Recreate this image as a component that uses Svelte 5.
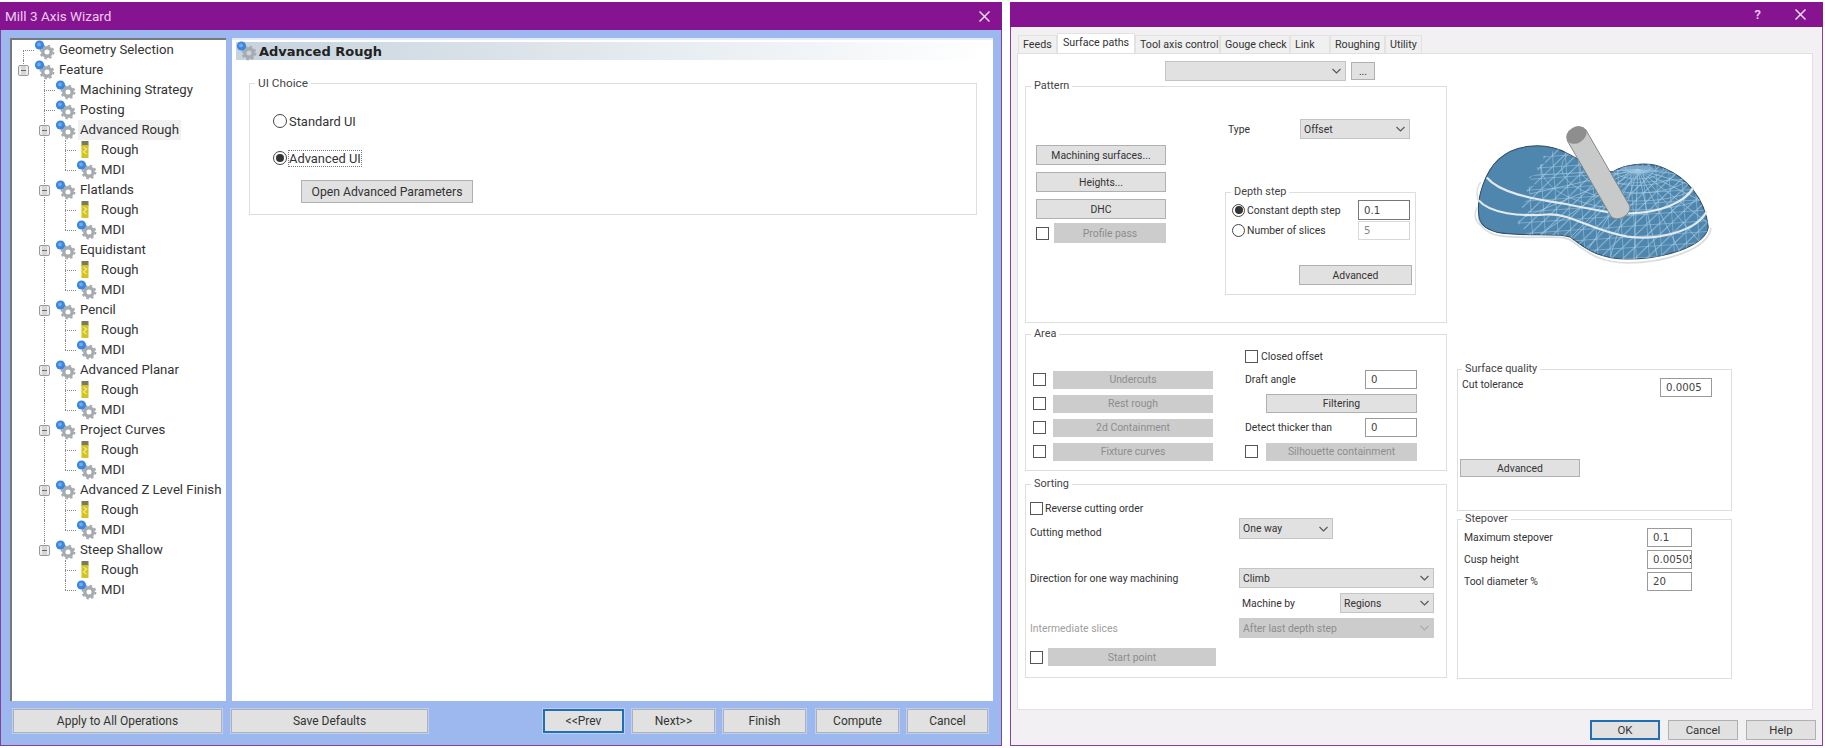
<script>
  // Tree data for the wizard panel
  const ops = [
    'Advanced Rough',
    'Flatlands',
    'Equidistant',
    'Pencil',
    'Advanced Planar',
    'Project Curves',
    'Advanced Z Level Finish',
    'Steep Shallow'
  ];

  let rows = [
    { guides: ['tee-top'], icon: 'gear', label: 'Geometry Selection' },
    { guides: ['ell-box'], icon: 'gear', label: 'Feature' },
    { guides: ['blank', 'tee'], icon: 'gear', label: 'Machining Strategy' },
    { guides: ['blank', 'tee'], icon: 'gear', label: 'Posting' }
  ];

  ops.forEach((label, i) => {
    const last = i === ops.length - 1;
    const trunk = last ? 'blank' : 'pipe';
    rows.push({
      guides: ['blank', last ? 'ell-box' : 'tee-box'],
      icon: 'gear',
      label,
      selected: i === 0
    });
    rows.push({ guides: ['blank', trunk, 'tee'], icon: 'mill', label: 'Rough' });
    rows.push({ guides: ['blank', trunk, 'ell'], icon: 'gear', label: 'MDI' });
  });

  const tabs = [
    { label: 'Feeds', width: 39 },
    { label: 'Surface paths', width: 78, active: true },
    { label: 'Tool axis control', width: 85 },
    { label: 'Gouge check', width: 70 },
    { label: 'Link', width: 40 },
    { label: 'Roughing', width: 55 },
    { label: 'Utility', width: 37 }
  ];

  // Wireframe lines over the blue surface, spokes first and then rings
  const hub = [650, 238];
  const spokes = [];
  for (let a = 8; a < 180; a += 12) {
    const r = (a * Math.PI) / 180;
    spokes.push([hub[0] + Math.cos(r) * 380, hub[1] + Math.sin(r) * 300]);
  }
  const rings = [30, 62, 98, 138, 182, 230];
</script>

{#snippet gear()}
  <svg class="ico" width="26" height="24" viewBox="0 0 26 24">
    <circle cx="13" cy="14" r="4.2" fill="none" stroke="#a6abb0" stroke-width="3.4" />
    <circle cx="13" cy="14" r="6.4" fill="none" stroke="#a6abb0" stroke-width="2" stroke-dasharray="2.5 2.5" />
    <circle cx="5.5" cy="7" r="4.6" fill="#3b87e0" />
    <circle cx="5" cy="6.4" r="1.9" fill="#6fabee" />
  </svg>
{/snippet}

{#snippet mill()}
  <svg class="ico" width="26" height="24" viewBox="0 0 26 24">
    <rect x="5.500" y="3" width="7" height="5" fill="#7c7a5c" />
    <rect x="5.500" y="7" width="7" height="13" fill="#d4c21e" />
    <path d="M7.500 9l3 2-3 3 3 2" fill="none" stroke="#f3ea8a" stroke-width="1.2" />
  </svg>
{/snippet}

{#snippet chevron()}
  <svg class="chev" width="9" height="6" viewBox="0 0 9 6">
    <path d="M.5 1l4 4 4-4" fill="none" stroke="#555" stroke-width="1.1" />
  </svg>
{/snippet}

{#snippet closeX()}
  <svg width="11" height="11" viewBox="0 0 11 11">
    <path d="M.5.5l10 10M10.5.5l-10 10" stroke="#f3d9f5" stroke-width="1.5" />
  </svg>
{/snippet}

<div class="screen">
  <!-- Left window -->
  <section class="win wizard">
    <header class="title">
      <span class="title-text">Mill 3 Axis Wizard</span>
      <span class="close">{@render closeX()}</span>
    </header>

    <div class="wizard-body">
      <div class="panels">
        <div class="tree">
          {#each rows as row}
            <div class="tree-row">
              {#each row.guides as g}
                <span class="guide {g}"></span>
              {/each}
              {#if row.icon === 'gear'}{@render gear()}{:else}{@render mill()}{/if}
              <span class="tree-label" class:selected={row.selected}>{row.label}</span>
            </div>
          {/each}
        </div>

        <div class="page">
          <div class="page-head">
            {@render gear()}
            <span>Advanced Rough</span>
          </div>
          <fieldset class="ui-choice">
            <legend>UI Choice</legend>
            <div class="ui-row"><span class="radio"></span><span>Standard UI</span></div>
            <div class="ui-row second"><span class="radio on"></span><span class="focus">Advanced UI</span></div>
            <button class="btn open-adv">Open Advanced Parameters</button>
          </fieldset>
        </div>
      </div>

      <div class="wizard-buttons">
        <button class="btn apply">Apply to All Operations</button>
        <button class="btn save">Save Defaults</button>
        <button class="btn nav first default">&lt;&lt;Prev</button>
        <button class="btn nav">Next&gt;&gt;</button>
        <button class="btn nav">Finish</button>
        <button class="btn nav wide-gap">Compute</button>
        <button class="btn nav last">Cancel</button>
      </div>
    </div>
  </section>

  <!-- Right window -->
  <section class="win dialog">
    <header class="title short">
      <span class="help-mark">?</span>
      <span class="close">{@render closeX()}</span>
    </header>

    <div class="tabs">
      {#each tabs as tab}
        <div class="tab" class:active={tab.active} style="width: {tab.width}px">{tab.label}</div>
      {/each}
    </div>

    <div class="tab-panel">
      <div class="col-left">
        <div class="top-combo">
          <div class="combo blank-combo">{@render chevron()}</div>
          <button class="btn dots">...</button>
        </div>

        <fieldset class="pattern">
          <legend>Pattern</legend>
          <div class="pattern-left">
            <button class="btn">Machining surfaces...</button>
            <button class="btn">Heights...</button>
            <button class="btn">DHC</button>
            <div class="check-row">
              <span class="check"></span>
              <button class="btn off grow">Profile pass</button>
            </div>
          </div>
          <div class="pattern-right">
            <div class="type-row">
              <span>Type</span>
              <div class="combo type-combo">Offset{@render chevron()}</div>
            </div>
            <fieldset class="depth">
              <legend>Depth step</legend>
              <div class="depth-row">
                <span class="radio small on"></span>
                <span class="depth-label">Constant depth step</span>
                <input class="num strong" readonly value="0.1" />
              </div>
              <div class="depth-row">
                <span class="radio small"></span>
                <span class="depth-label">Number of slices</span>
                <input class="num faint" readonly value="5" />
              </div>
              <button class="btn depth-adv">Advanced</button>
            </fieldset>
          </div>
        </fieldset>

        <fieldset class="area">
          <legend>Area</legend>
          <div class="area-grid">
            <div></div>
            <div class="check-row closed"><span class="check"></span><span>Closed offset</span></div>

            <div class="check-row"><span class="check"></span><button class="btn off grow">Undercuts</button></div>
            <div class="label-input"><span>Draft angle</span><input class="num" readonly value="0" /></div>

            <div class="check-row"><span class="check"></span><button class="btn off grow">Rest rough</button></div>
            <button class="btn filter">Filtering</button>

            <div class="check-row"><span class="check"></span><button class="btn off grow">2d Containment</button></div>
            <div class="label-input"><span>Detect thicker than</span><input class="num" readonly value="0" /></div>

            <div class="check-row"><span class="check"></span><button class="btn off grow">Fixture curves</button></div>
            <div class="check-row sil"><span class="check"></span><button class="btn off grow">Silhouette containment</button></div>
          </div>
        </fieldset>

        <fieldset class="sorting">
          <legend>Sorting</legend>
          <div class="check-row reverse"><span class="check"></span><span>Reverse cutting order</span></div>
          <div class="sort-row cutting">
            <span class="sort-label low">Cutting method</span>
            <div class="combo one-way">One way{@render chevron()}</div>
          </div>
          <div class="sort-row direction">
            <span class="sort-label">Direction for one way machining</span>
            <div class="combo long">Climb{@render chevron()}</div>
          </div>
          <div class="sort-row machine">
            <span class="sort-label"></span>
            <div class="machine-by">
              <span>Machine by</span>
              <div class="combo regions">Regions{@render chevron()}</div>
            </div>
          </div>
          <div class="sort-row inter">
            <span class="sort-label dim">Intermediate slices</span>
            <div class="combo long off">After last depth step{@render chevron()}</div>
          </div>
          <div class="check-row start"><span class="check"></span><button class="btn off grow">Start point</button></div>
        </fieldset>
      </div>

      <div class="col-right">
        <svg class="surface" width="245" height="143" viewBox="150 100 730 425">
          <defs>
            <clipPath id="blob">
              <path d="M176 372C170 320 195 245 235 208C280 165 370 152 440 190C470 205 530 242 575 245C610 222 680 212 730 235C790 260 850 320 860 410C850 470 720 505 620 505C530 505 490 470 450 440C420 425 300 440 230 425C195 415 178 400 176 372Z" />
            </clipPath>
            <clipPath id="meshEdge">
              <path d="M400 170L390 200L365 195L375 220L345 225L355 250L325 260L345 285L310 290L335 320L295 345L325 365L290 395L315 420L330 520L900 520L900 170Z" />
            </clipPath>
            <pattern id="tri" width="38" height="32" patternUnits="userSpaceOnUse" patternTransform="rotate(-4)">
              <path d="M0 0H38M0 0V32M0 32L38 0" fill="none" stroke="#a9cfe8" stroke-width="2.8" />
            </pattern>
          </defs>
          <path d="M176 372C172 400 195 428 240 436C320 448 420 430 450 448C490 478 530 516 620 516C720 516 860 480 868 412" fill="none" stroke="#d8dde0" stroke-width="5" />
          <path d="M176 372C170 320 195 245 235 208C280 165 370 152 440 190C470 205 530 242 575 245C610 222 680 212 730 235C790 260 850 320 860 410C850 470 720 505 620 505C530 505 490 470 450 440C420 425 300 440 230 425C195 415 178 400 176 372Z" fill="#4f86ad" stroke="#2e4a66" stroke-width="3" />
          <g clip-path="url(#blob)">
            <g clip-path="url(#meshEdge)">
              <rect x="150" y="100" width="750" height="430" fill="url(#tri)" />
              <ellipse cx="650" cy="238" rx="50" ry="12" fill="#7ba8c8" />
              {#each spokes as s}
                <line x1={hub[0]} y1={hub[1]} x2={s[0]} y2={s[1]} stroke="#a9cfe8" stroke-width="2" />
              {/each}
              {#each rings as r}
                <ellipse cx={hub[0]} cy={hub[1] - 6} rx={r * 1.25} ry={r * 0.55} fill="none" stroke="#a9cfe8" stroke-width="1.8" />
              {/each}
            </g>
          </g>
          <path d="M200 262C240 310 340 325 430 340C500 352 560 372 640 368C710 364 790 340 815 292" fill="none" stroke="#e2eaef" stroke-width="6.500" />
          <path d="M176 330C210 370 300 378 380 372C450 368 510 420 620 438C710 450 830 420 855 362" fill="none" stroke="#e2eaef" stroke-width="6.500" />
          <path d="M182 275C165 300 170 325 178 335M172 350C158 375 165 395 190 412" fill="none" stroke="#d8dde0" stroke-width="4" />
          <g transform="translate(467 135) rotate(-30)">
            <path d="M-32 0V260A32 22 0 0 0 32 260V0Z" fill="#c8cac9" stroke="#7e8384" stroke-width="2.5" />
            <ellipse cx="0" cy="0" rx="32" ry="24" fill="#8e8e8e" />
          </g>
        </svg>

        <fieldset class="quality">
          <legend>Surface quality</legend>
          <div class="quality-row">
            <span>Cut tolerance</span>
            <input class="num" readonly value="0.0005" />
          </div>
          <button class="btn quality-adv">Advanced</button>
        </fieldset>

        <fieldset class="stepover">
          <legend>Stepover</legend>
          <div class="step-row"><span>Maximum stepover</span><input class="num" readonly value="0.1" /></div>
          <div class="step-row"><span>Cusp height</span><input class="num" readonly value="0.00505" /></div>
          <div class="step-row"><span>Tool diameter %</span><input class="num" readonly value="20" /></div>
        </fieldset>
      </div>
    </div>

    <div class="dialog-buttons">
      <button class="btn default">OK</button>
      <button class="btn">Cancel</button>
      <button class="btn">Help</button>
    </div>
  </section>
</div>

<style>
  :global(body) {
    margin: 0;
    background: #fff;
  }

  .screen {
    display: flex;
    gap: 8px;
    width: 1825px;
    height: 748px;
    padding-top: 2px;
    box-sizing: border-box;
    font-family: Roboto, "Noto Sans", sans-serif;
    font-size: 10.4px;
    color: #333;
  }

  .win {
    display: flex;
    flex-direction: column;
    height: 744px;
    box-sizing: border-box;
    border: 1px solid #84409a;
    border-top: 0;
  }

  .title {
    display: flex;
    align-items: center;
    height: 28px;
    flex: none;
    background: #861490;
    color: #eccdf0;
    font-size: 13.5px;
    padding: 0 12px 0 5px;
    margin: 0 -1px;
  }
  .title-text {
    flex: 1;
  }
  .close {
    display: flex;
  }
  .title.short {
    height: 25px;
    justify-content: flex-end;
    padding-right: 17px;
  }
  .help-mark {
    font-size: 13px;
    font-weight: 600;
    margin-right: 34px;
  }

  /* Wizard window */
  .wizard {
    width: 1002px;
    background: #9db8ef;
  }
  .wizard-body {
    flex: 1;
    display: flex;
    flex-direction: column;
    padding: 8px 8px 0 9px;
    min-height: 0;
  }
  .panels {
    display: flex;
    gap: 6px;
    height: 663px;
  }

  .tree {
    width: 216px;
    box-sizing: border-box;
    background: #fff;
    border-top: 2px solid #777;
    border-left: 2px solid #777;
    padding: 0 0 0 1px;
    font-size: 13.2px;
    color: #333;
  }
  .tree-row {
    display: flex;
    align-items: center;
    height: 20px;
  }
  .ico {
    flex: none;
    overflow: visible;
    margin-right: -1px;
  }
  .tree-label {
    line-height: 20px;
    white-space: nowrap;
  }
  .tree-label.selected {
    background: #f0f0f0;
    padding: 0 2px;
    margin-left: -2px;
  }

  .guide {
    position: relative;
    flex: none;
    width: 21px;
    height: 20px;
  }
  .guide::before,
  .guide::after {
    content: "";
    position: absolute;
  }
  /* vertical part */
  .pipe::before,
  .tee::before,
  .tee-box::before {
    left: 10px;
    top: 0;
    height: 20px;
    border-left: 1px dotted #888;
  }
  .ell::before,
  .ell-box::before,
  .tee-top::before {
    left: 10px;
    top: 0;
    height: 10px;
    border-left: 1px dotted #888;
  }
  .tee-top::before {
    top: 10px;
  }
  /* horizontal part */
  .tee::after,
  .ell::after,
  .tee-top::after {
    left: 10px;
    top: 10px;
    width: 11px;
    border-top: 1px dotted #888;
  }
  /* the +/- box */
  .tee-box::after,
  .ell-box::after {
    left: 5px;
    top: 5px;
    width: 9px;
    height: 9px;
    background: linear-gradient(#d6d6d6 0 4px, #666 4px 5px, #d6d6d6 5px);
    background-size: 5px 9px;
    background-repeat: no-repeat;
    background-position: center;
    background-color: #eee;
    border: 1px solid #9a9a9a;
    border-radius: 2px;
  }

  .page {
    flex: 1;
    background: #fff;
    padding-top: 4px;
    box-shadow: inset 0 2px 0 #e6ecf7;
  }
  .page-head {
    display: flex;
    align-items: center;
    height: 18px;
    margin: 0 3px 0 4px;
    background: linear-gradient(to right, #c6d3dd, #fff);
    font-family: "DejaVu Sans", sans-serif;
    font-weight: 700;
    font-size: 13px;
    color: #222;
  }
  .page-head :global(.ico) {
    margin-right: -3px;
  }
  .ui-choice {
    margin: 16px 0 0 17px;
    width: 728px;
    height: 139px;
    box-sizing: border-box;
  }
  .ui-row {
    display: flex;
    align-items: center;
    gap: 2px;
    margin: 23px 0 0 23px;
    font-size: 12.9px;
    height: 16px;
  }
  .ui-row.second {
    margin-top: 21px;
  }
  .focus {
    outline: 1px dotted #777;
  }
  .ui-choice .open-adv {
    display: block;
    width: 172px;
    height: 23px;
    margin: 14px 0 0 51px;
    font-size: 12.2px;
  }

  .wizard-buttons {
    display: flex;
    margin-top: 8px;
    padding-left: 3px;
  }
  .wizard-buttons .btn {
    height: 24px;
    font-size: 12px;
    box-shadow: 0 0 0 1px #bcd0f5;
  }
  .apply {
    width: 209px;
  }
  .save {
    width: 197px;
    margin-left: 9px;
  }
  .nav {
    width: 83px;
    margin-left: 8px;
  }
  .nav.first {
    width: 81px;
    margin-left: 115px;
  }
  .nav.last {
    width: 81px;
  }
  .wide-gap {
    margin-left: 10px;
  }

  /* Shared controls */
  .btn {
    box-sizing: border-box;
    background: #e1e1e1;
    border: 1px solid #b0b0b0;
    border-radius: 0;
    padding: 0;
    font-family: inherit;
    font-size: 10.4px;
    color: #333;
  }
  .btn.default {
    border: 2px solid #1f6fb2;
  }
  .btn.off {
    background: #cccccc;
    border-color: #cccccc;
    color: #8c8c8c;
  }
  .grow {
    flex: 1;
  }

  fieldset {
    margin: 0;
    padding: 0;
    border: 1px solid #dedede;
    min-width: 0;
  }
  legend {
    margin-left: 5px;
    padding: 0 3px;
    line-height: 14px;
    font-size: 10.9px;
    color: #444;
  }
  .ui-choice legend {
    font-size: 11.8px;
  }
  .quality legend {
    margin-left: 0;
  }
  .stepover legend {
    margin-left: -2px;
  }
  .sorting legend {
    margin-left: 1px;
  }

  .radio {
    flex: none;
    display: inline-flex;
    align-items: center;
    justify-content: center;
    width: 14px;
    height: 14px;
    box-sizing: border-box;
    border: 1px solid #444;
    border-radius: 50%;
    background: #fff;
  }
  .radio.small {
    width: 13px;
    height: 13px;
  }
  .radio.on::after {
    content: "";
    width: 8px;
    height: 8px;
    border-radius: 50%;
    background: #333;
  }
  .check {
    flex: none;
    width: 13px;
    height: 13px;
    box-sizing: border-box;
    border: 1px solid #555;
    background: #fff;
  }
  .check-row {
    display: flex;
    align-items: center;
  }
  .num {
    box-sizing: border-box;
    height: 19px;
    padding: 0 0 0 5px;
    border: 1px solid #9a9a9a;
    border-radius: 0;
    background: #fff;
    font-family: "DejaVu Sans", sans-serif;
    font-size: 10.2px;
    color: #444;
    outline: 0;
  }
  .num.strong {
    border-color: #777;
    height: 20px;
  }
  .num.faint {
    border-color: #d8d8d8;
    color: #888;
  }
  .combo {
    display: flex;
    align-items: center;
    justify-content: space-between;
    box-sizing: border-box;
    height: 20px;
    padding: 0 4px 0 3px;
    background: #e1e1e1;
    border: 1px solid #c4c4c4;
  }
  .combo.off {
    background: #cccccc;
    border-color: #cccccc;
    color: #8c8c8c;
  }
  .combo.off :global(path) {
    stroke: #aaa;
  }

  /* Dialog window */
  .dialog {
    width: 813px;
    background: #f2f0f2;
  }
  .tabs {
    display: flex;
    margin: 8px 0 0 7px;
    height: 18px;
    font-size: 10.7px;
  }
  .tab {
    box-sizing: border-box;
    padding: 2px 0 0 4px;
    background: #f0f0f0;
    border: 1px solid #e2e2e2;
    border-bottom: 0;
    white-space: nowrap;
  }
  .tab.active {
    background: #fff;
    height: 20px;
    margin-top: -2px;
    padding: 2px 0 0 5px;
    position: relative;
  }
  .tab-panel {
    display: flex;
    width: 796px;
    height: 657px;
    margin-left: 6px;
    box-sizing: border-box;
    background: #fff;
    border: 1px solid #e0e0e0;
    padding: 7px 0 0 7px;
  }
  .col-left {
    width: 422px;
    flex: none;
  }
  .col-right {
    width: 275px;
    margin-left: 10px;
    flex: none;
  }

  .top-combo {
    display: flex;
    align-items: flex-start;
    gap: 5px;
    height: 18px;
    margin-left: 140px;
  }
  .blank-combo {
    width: 181px;
    justify-content: flex-end;
    flex: none;
  }
  .dots {
    width: 24px;
    height: 18px;
    margin-top: 1px;
  }

  .pattern {
    display: flex;
    height: 244px;
    box-sizing: border-box;
  }
  .pattern-left {
    display: flex;
    flex-direction: column;
    gap: 7px;
    width: 130px;
    margin-left: 10px;
    padding-top: 52px;
  }
  .pattern-left > .btn {
    height: 20px;
  }
  .pattern-left .check-row {
    gap: 5px;
    margin-top: -3px;
  }
  .pattern-left .check-row .btn {
    height: 20px;
  }
  .pattern-right {
    margin-left: 59px;
    width: 191px;
    padding-top: 26px;
  }
  .type-row {
    display: flex;
    align-items: center;
    padding-left: 3px;
  }
  .type-row span {
    width: 72px;
  }
  .type-combo {
    width: 110px;
  }
  .depth {
    margin-top: 46px;
    height: 110px;
    box-sizing: border-box;
    padding-top: 1px;
  }
  .depth-row {
    display: flex;
    align-items: center;
    height: 20.5px;
    padding-left: 6px;
  }
  .depth-label {
    margin-left: 2px;
    width: 111px;
    flex: none;
  }
  .depth-row .num {
    width: 52px;
  }
  .depth-adv {
    display: block;
    width: 113px;
    height: 20px;
    margin: 24px 0 0 73px;
  }

  .area {
    height: 144px;
    margin-top: 4px;
    box-sizing: border-box;
  }
  .area-grid {
    display: grid;
    grid-template-columns: 180px 172px;
    grid-template-rows: 24px repeat(4, 19px);
    column-gap: 32px;
    row-gap: 5px;
    margin-left: 7px;
  }
  .area-grid .check-row {
    gap: 7px;
  }
  .area-grid .check-row .btn {
    height: 18px;
  }
  .closed {
    margin-top: 6px;
    gap: 3px !important;
  }
  .label-input {
    display: flex;
    align-items: center;
    justify-content: space-between;
  }
  .label-input .num {
    width: 52px;
  }
  .filter {
    margin-left: 21px;
    height: 19px;
  }
  .sil {
    gap: 8px !important;
  }

  .sorting {
    height: 201px;
    margin-top: 6px;
    box-sizing: border-box;
    padding: 11px 0 0 4px;
  }
  .reverse {
    gap: 2px;
  }
  .sort-row {
    display: flex;
    align-items: center;
    margin-top: 5px;
    height: 20px;
  }
  .sort-label {
    width: 209px;
    flex: none;
  }
  .sort-label.low {
    margin-top: 8px;
  }
  .sort-label.dim {
    color: #a0a0a0;
  }
  .cutting {
    margin-top: 3px;
    height: 21px;
  }
  .direction {
    margin-top: 29px;
  }
  .one-way {
    width: 94px;
    height: 21px;
  }
  .long {
    width: 195px;
  }
  .machine-by {
    display: flex;
    align-items: center;
    width: 195px;
    padding-left: 3px;
    box-sizing: border-box;
  }
  .machine-by span {
    width: 98px;
  }
  .regions {
    width: 94px;
  }
  .start {
    margin-top: 10px;
    width: 186px;
    gap: 5px;
  }
  .start .btn {
    height: 18px;
  }

  .surface {
    display: block;
    margin: 62px 0 0 13px;
  }
  .quality {
    margin-top: 96px;
    height: 149px;
    box-sizing: border-box;
    padding: 2px 0 0 4px;
  }
  .quality-row {
    display: flex;
    justify-content: space-between;
    width: 250px;
  }
  .quality-row .num {
    width: 52px;
  }
  .quality-adv {
    display: block;
    width: 120px;
    height: 18px;
    margin: 62px 0 0 -2px;
  }
  .stepover {
    margin-top: 1px;
    height: 167px;
    box-sizing: border-box;
    padding: 2px 0 0 6px;
  }
  .step-row {
    display: flex;
    align-items: center;
    justify-content: space-between;
    width: 228px;
    height: 19px;
    margin-bottom: 3px;
  }
  .step-row .num {
    width: 45px;
  }

  .dialog-buttons {
    display: flex;
    justify-content: flex-end;
    gap: 8px;
    margin: 10px 6px 0 0;
  }
  .dialog-buttons .btn {
    width: 70px;
    height: 20px;
    font-size: 11.4px;
  }
</style>
